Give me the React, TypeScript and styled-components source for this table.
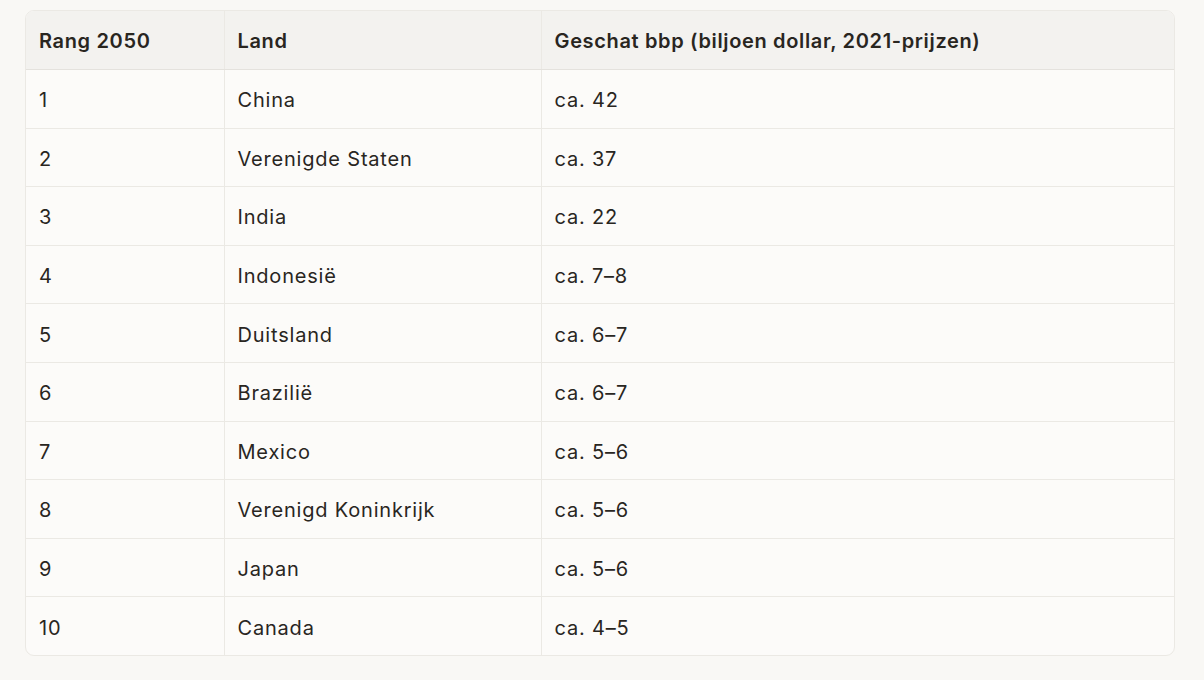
import React from "react";
import styled, { createGlobalStyle } from "styled-components";

const Global = createGlobalStyle`
  html, body { margin: 0; padding: 0; background: #f9f8f5; }
  body { font-family: Inter, "Noto Sans", sans-serif; color: #29261f; }
`;

const Page = styled.div`
  padding: 10px 0 0 25px;
`;

const Frame = styled.div`
  box-sizing: border-box;
  width: 1150px;
  border: 1px solid #ebe9e4;
  border-radius: 9px;
  overflow: hidden;
  background: #fcfbf9;
`;

const Table = styled.table`
  width: 100%;
  border-collapse: collapse;
  table-layout: fixed;
`;

const Col = styled.col<{ $w: number }>`
  width: ${(p) => p.$w}px;
`;

const HeadCell = styled.th`
  background: #f3f2ef;
  height: 56px;
  padding: 2px 13px 0;
  text-align: left;
  font-size: 20px;
  font-weight: 600;
  letter-spacing: 0.65px;
  color: #29261f;
  border-bottom: 1px solid #e4e2dd;
  border-left: 1px solid #ebe9e4;
  &:first-child { border-left: none; }
`;

const Cell = styled.td`
  height: 54.6px;
  padding: 3px 13px 0;
  font-size: 20px;
  font-weight: 400;
  letter-spacing: 0.8px;
  color: #29261f;
  border-top: 1px solid #ebe9e4;
  border-left: 1px solid #ebe9e4;
  &:first-child { border-left: none; }
`;

const Row = styled.tr`
  &:first-child td { border-top: none; }
`;

const rows: [string, string, string][] = [
  ["1", "China", "ca. 42"],
  ["2", "Verenigde Staten", "ca. 37"],
  ["3", "India", "ca. 22"],
  ["4", "Indonesië", "ca. 7–8"],
  ["5", "Duitsland", "ca. 6–7"],
  ["6", "Brazilië", "ca. 6–7"],
  ["7", "Mexico", "ca. 5–6"],
  ["8", "Verenigd Koninkrijk", "ca. 5–6"],
  ["9", "Japan", "ca. 5–6"],
  ["10", "Canada", "ca. 4–5"],
];

export default function App() {
  return (
    <>
      <Global />
      <Page>
        <Frame>
          <Table>
            <colgroup>
              <Col $w={198} />
              <Col $w={317} />
              <Col $w={633} />
            </colgroup>
            <thead>
              <tr>
                <HeadCell>Rang 2050</HeadCell>
                <HeadCell>Land</HeadCell>
                <HeadCell>Geschat bbp (biljoen dollar, 2021-prijzen)</HeadCell>
              </tr>
            </thead>
            <tbody>
              {rows.map((r) => (
                <Row key={r[0]}>
                  <Cell>{r[0]}</Cell>
                  <Cell>{r[1]}</Cell>
                  <Cell>{r[2]}</Cell>
                </Row>
              ))}
            </tbody>
          </Table>
        </Frame>
      </Page>
    </>
  );
}
